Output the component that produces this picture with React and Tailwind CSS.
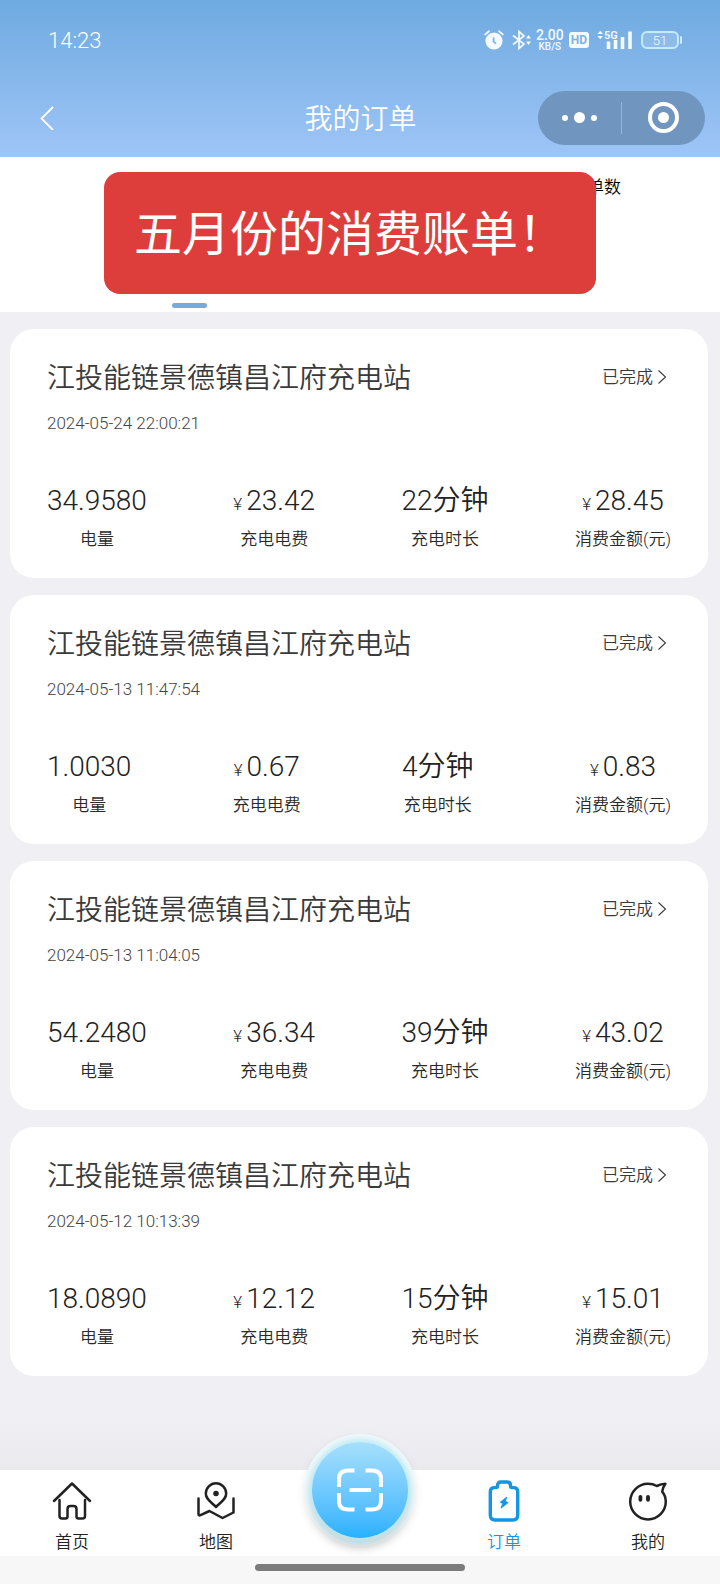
import React, { useState } from "react";

const orders = [
    {id: 1, station: "江投能链景德镇昌江府充电站", time: "2024-05-24 22:00:21", power: "34.9580", fee: "23.42", minutes: 22, total: "28.45"},
    {id: 2, station: "江投能链景德镇昌江府充电站", time: "2024-05-13 11:47:54", power: "1.0030", fee: "0.67", minutes: 4, total: "0.83"},
    {id: 3, station: "江投能链景德镇昌江府充电站", time: "2024-05-13 11:04:05", power: "54.2480", fee: "36.34", minutes: 39, total: "43.02"},
    {id: 4, station: "江投能链景德镇昌江府充电站", time: "2024-05-12 10:13:39", power: "18.0890", fee: "12.12", minutes: 15, total: "15.01"},
];

function HomeIcon() {
    return (
        <svg viewBox="0 0 40 40" className="size-10" fill="none" stroke="currentColor" strokeWidth="2.5" strokeLinecap="round" strokeLinejoin="round">
            <path d="M2 20 L20 2.5 L38 20"/>
            <path d="M7.5 19 V35 Q7.5 37.5 10 37.5 H13.5 Q15.5 37.5 15.5 35.5 V28 Q15.5 25 18.5 25 H21.5 Q24.5 25 24.5 28 V35.5 Q24.5 37.5 26.5 37.5 H30.5 Q33 37.5 33 35 V19"/>
        </svg>
    );
}

function MapIcon() {
    return (
        <svg viewBox="0 0 40 40" className="size-10" fill="none" stroke="currentColor" strokeWidth="2.5" strokeLinecap="round" strokeLinejoin="round">
            <path d="M20 26 C15 21 9.8 18 9.8 12.5 A10.2 10.2 0 0 1 30.2 12.5 C30.2 18 25 21 20 26 Z"/>
            <circle cx="20" cy="12.5" r="2.8" fill="currentColor" stroke="none"/>
            <path d="M2.5 17.5 V33 Q2.5 35 4.5 34.2 L13.5 30 L26.5 37 L37.5 31.5 V17.5"/>
        </svg>
    );
}

function OrderIcon() {
    return (
        <svg viewBox="0 0 40 44" className="h-11 w-10" fill="none" stroke="currentColor" strokeWidth="3.4" strokeLinejoin="round">
            <path d="M13.5 6.5 Q13.5 3 17 3 H23 Q26.5 3 26.5 6.5 V7 Q26.5 8.6 28 8.6 H29.5 Q33.7 8.6 33.7 12.8 V36 Q33.7 41 29 41 H11 Q6.3 41 6.3 36 V12.8 Q6.3 8.6 10.5 8.6 H12 Q13.5 8.6 13.5 7 Z"/>
            <path d="M22.8 18 L16.2 23.2 L18.6 24.6 L17 29.2 L24.2 23.6 L21.4 22.2 Z" fill="currentColor" strokeWidth="0.8"/>
        </svg>
    );
}

function MineIcon() {
    return (
        <svg viewBox="0 0 40 40" className="size-10" fill="none" stroke="currentColor" strokeWidth="2.5" strokeLinejoin="round">
            <path d="M28.8 5 Q25 2.8 20 2.8 A17.8 17.8 0 1 0 37.8 20.6 Q37.6 14.6 34.2 10.6 Q34.4 7 37.4 2.8 Q33 3 28.8 5 Z"/>
            <path d="M12.4 15.8 V18.8 M20 15.8 V18.8" strokeWidth="3.8" strokeLinecap="round"/>
        </svg>
    );
}

function StatusBar() {
    return (
        <div className="flex h-20 items-center justify-between pr-[38px] pl-12 text-white">
            <span className="text-[22px]">14:23</span>
            <div className="flex items-center text-[#f4faff]">
                <svg viewBox="0 0 20 20" className="size-5">
                    <circle cx="10" cy="11" r="8.6" fill="currentColor"/>
                    <path d="M1.2 4.4 L5 1.3 M18.8 4.4 L15 1.3" stroke="currentColor" strokeWidth="1.8" strokeLinecap="round"/>
                    <path d="M9.6 7.4 V11.6 L12 13.6" fill="none" stroke="#7fb3e2" strokeWidth="1.8"/>
                </svg>
                <svg viewBox="0 0 20 20" className="ml-2 size-5" fill="none" stroke="currentColor" strokeWidth="1.7">
                    <path d="M1 5.5 L12 14 L7 18.5 V1.5 L12 6 L1 14.5"/>
                    <path d="M14 8.5 L16.5 5 L19 8.5 Z M14 11.5 L16.5 15 L19 11.5 Z" fill="currentColor" stroke="none"/>
                </svg>
                <div className="ml-1 flex flex-col items-center font-medium">
                    <span className="text-[14px] leading-[14px]">2.00</span>
                    <span className="text-[10px] leading-[10px]">KB/S</span>
                </div>
                <span className="ml-[5px] rounded-[3px] bg-[#f4faff] px-[2px] text-[12px] leading-4 font-bold text-[#7fb3e2]">HD</span>
                <svg viewBox="0 0 36 22" className="ml-2 h-[22px] w-9">
                    <path d="M0.5 5 L3.3 1.8 L6 5 Z M0.5 7 L3.3 10.2 L6 7 Z" fill="currentColor"/>
                    <text x="7" y="9.5" fontSize="11" fontWeight="600" fill="currentColor">5G</text>
                    <path d="M11.5 20 V12.5 M18.5 20 V11 M25.5 20 V8 M33 20 V2.5" stroke="currentColor" strokeWidth="3.6"/>
                </svg>
                <div className="ml-2 flex h-[18px] w-[38px] items-center justify-center rounded-md border-2 border-[#c3ecfb] bg-white/15 text-[13px] leading-none">51</div>
                <span className="ml-px h-2 w-[2px] rounded-full bg-[#c3ecfb]"/>
            </div>
        </div>
    );
}

function Header() {
    return (
        <header className="h-[157px] bg-linear-to-b from-[#6eaae0] to-[#9fc5f7]">
            <StatusBar/>
            <div className="grid h-[75px] grid-cols-[1fr_auto_1fr] items-center pr-[15px] pl-8 text-white">
                <button type="button" aria-label="返回" className="justify-self-start p-1">
                    <svg viewBox="0 0 24 24" className="size-6" fill="none" stroke="currentColor" strokeWidth="1.8">
                        <path d="M17 1 L5.5 12.5 L17 24"/>
                    </svg>
                </button>
                <h1 className="mr-4 pt-1 text-[28px] leading-10">我的订单</h1>
                <div className="flex h-[54px] w-[167px] items-center justify-self-end rounded-full bg-[#7096c0]">
                    <button type="button" aria-label="更多" className="flex flex-1 items-center justify-center gap-[6px]">
                        <span className="size-[6px] rounded-full bg-white"/>
                        <span className="size-[11px] rounded-full bg-white"/>
                        <span className="size-[6px] rounded-full bg-white"/>
                    </button>
                    <span className="h-8 w-px bg-white/30"/>
                    <button type="button" aria-label="关闭" className="flex flex-1 items-center justify-center">
                        <span className="flex size-[31px] items-center justify-center rounded-full border-4 border-white">
                            <span className="size-[11px] rounded-full bg-white"/>
                        </span>
                    </button>
                </div>
            </div>
        </header>
    );
}

function Summary() {
    return (
        <section className="relative flex h-[155px] flex-col justify-between bg-white pt-[18px] pb-1">
            <div className="flex justify-end pr-[99px]">
                <span className="text-[17px] leading-6 text-black">单数</span>
            </div>
            <div className="pl-[172px]">
                <div className="h-[5px] w-[35px] rounded-full bg-[#76abdd]"/>
            </div>
            <p className="absolute top-[15px] right-[124px] left-[104px] flex h-[122px] items-center justify-center rounded-2xl bg-[#de3e3b] pt-1 text-[48px] font-normal text-white">
                五月份的消费账单！
            </p>
        </section>
    );
}

function Stat({label, yuan, children}) {
    return (
        <div className="flex flex-col-reverse items-center">
            <dt className="text-[17px] leading-6 text-[#2a2a2a]">{label}</dt>
            <dd className="mb-2 flex h-9 items-baseline text-[28px] leading-9 text-[#222]">
                {yuan && <span className="mr-1 text-[17px] leading-none">¥</span>}
                {children}
            </dd>
        </div>
    );
}

function OrderCard({order}) {
    return (
        <li className="rounded-3xl bg-white pt-7 pr-[37px] pb-[27px] pl-[37px]">
            <div className="flex items-center justify-between">
                <h2 className="pt-1 text-[28px] leading-9 text-[#3a3a3a]">{order.station}</h2>
                <a href="#order" className="flex items-center pr-1 text-[17px] leading-6 text-[#3a3a3a]">
                    已完成
                    <svg viewBox="0 0 10 16" className="ml-1 h-4 w-[10px]" fill="none" stroke="currentColor" strokeWidth="1.1">
                        <path d="M1.5 1.5 L8.5 8 L1.5 14.5"/>
                    </svg>
                </a>
            </div>
            <p className="mt-[14px] text-[17px] leading-6 text-[#444]">{order.time}</p>
            <dl className="mt-12 flex justify-between">
                <Stat label="电量">{order.power}</Stat>
                <Stat label="充电电费" yuan>{order.fee}</Stat>
                <Stat label="充电时长">{order.minutes}分钟</Stat>
                <Stat label="消费金额(元)" yuan>{order.total}</Stat>
            </dl>
        </li>
    );
}

function TabBar() {
    const [active, setActive] = useState("订单");

    const tab = (name, icon) => (
        <button
            type="button"
            onClick={() => setActive(name)}
            className={active === name
                ? "flex flex-col items-center text-[#1296e6]"
                : "flex flex-col items-center text-[#222]"}>
            <span className="flex h-11 items-center">{icon}</span>
            <span className="mt-[7px] text-[17px] leading-6">{name}</span>
        </button>
    );

    return (
        <footer className="mt-auto">
            <div className="h-12 bg-linear-to-b from-[#f0f0f4] to-[#e9e9ee]"/>
            <nav className="relative grid h-[86px] grid-cols-5 bg-white pt-[9px]">
                {tab("首页", <HomeIcon/>)}
                {tab("地图", <MapIcon/>)}
                <button
                    type="button"
                    aria-label="扫码充电"
                    className="absolute -top-9 left-1/2 flex size-28 -translate-x-1/2 items-center justify-center rounded-full bg-[#f3f8fa] shadow-[0_4px_10px_rgba(0,0,0,0.08)]">
                    <span className="flex size-24 items-center justify-center rounded-full bg-linear-to-b from-[#a6e0fb] to-[#24b1ff] shadow-[0_0_6px_3px_#b9ebf4,0_8px_10px_rgba(0,0,0,0.18)]">
                        <svg viewBox="0 0 46 44" className="h-11 w-[46px]" fill="none" stroke="#fff" strokeWidth="4">
                            <path d="M2 19 V11 Q2 2.5 11 2.5 H17.5"/>
                            <path d="M28.5 2.5 H35 Q44 2.5 44 11 V19"/>
                            <path d="M44 25 V33 Q44 41.5 35 41.5 H28.5"/>
                            <path d="M17.5 41.5 H11 Q2 41.5 2 33 V25"/>
                            <path d="M12.5 22 H34"/>
                        </svg>
                    </span>
                </button>
                <span/>
                {tab("订单", <OrderIcon/>)}
                {tab("我的", <MineIcon/>)}
            </nav>
            <div className="flex h-7 justify-center bg-[#f7f7f7] pt-2">
                <span className="h-[7px] w-[210px] rounded-full bg-[#7b7c7b]"/>
            </div>
        </footer>
    );
}

export default function App() {
    return (
        <div className="flex min-h-screen flex-col bg-[#f0f0f4] font-[Roboto,'Noto_Sans_CJK_SC',sans-serif] font-[350]">
            <Header/>
            <Summary/>
            <ul className="flex flex-col gap-[17px] pt-[17px] pr-3 pl-[10px]">
                {orders.map((order) => (
                    <OrderCard key={order.id} order={order}/>
                ))}
            </ul>
            <TabBar/>
        </div>
    );
}
